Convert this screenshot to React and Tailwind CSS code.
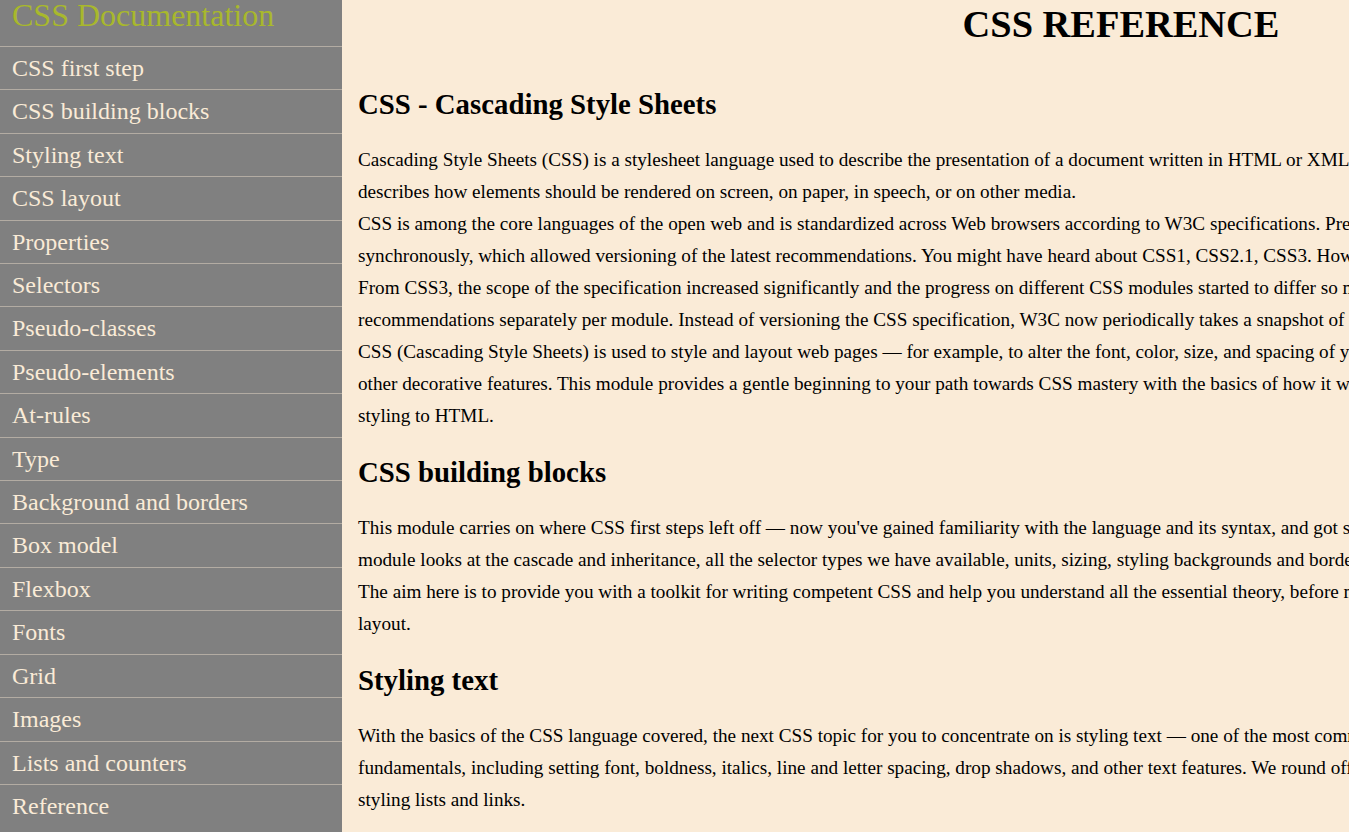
const navItems = [
  'CSS first step',
  'CSS building blocks',
  'Styling text',
  'CSS layout',
  'Properties',
  'Selectors',
  'Pseudo-classes',
  'Pseudo-elements',
  'At-rules',
  'Type',
  'Background and borders',
  'Box model',
  'Flexbox',
  'Fonts',
  'Grid',
  'Images',
  'Lists and counters',
  'Reference',
];

// each entry is one rendered line; the page is wider than the window so lines run off the right edge
const sections = [
  {
    title: 'CSS - Cascading Style Sheets',
    lines: [
      'Cascading Style Sheets (CSS) is a stylesheet language used to describe the presentation of a document written in HTML or XML (including XML dialects such as SVG, MathML or XHTML). CSS',
      'describes how elements should be rendered on screen, on paper, in speech, or on other media.',
      'CSS is among the core languages of the open web and is standardized across Web browsers according to W3C specifications. Previously, development of various parts of CSS specification was done',
      'synchronously, which allowed versioning of the latest recommendations. You might have heard about CSS1, CSS2.1, CSS3. However, CSS4 has never become an official version.',
      'From CSS3, the scope of the specification increased significantly and the progress on different CSS modules started to differ so much, that it became more effective to develop and release',
      'recommendations separately per module. Instead of versioning the CSS specification, W3C now periodically takes a snapshot of the latest stable state of the CSS specification.',
      'CSS (Cascading Style Sheets) is used to style and layout web pages — for example, to alter the font, color, size, and spacing of your content, split it into multiple columns, or add animations and',
      'other decorative features. This module provides a gentle beginning to your path towards CSS mastery with the basics of how it works, what the syntax looks like, and how you can start using it to add',
      'styling to HTML.',
    ],
  },
  {
    title: 'CSS building blocks',
    lines: [
      "This module carries on where CSS first steps left off — now you've gained familiarity with the language and its syntax, and got some basic experience with using it, its time to dive a bit deeper. This",
      'module looks at the cascade and inheritance, all the selector types we have available, units, sizing, styling backgrounds and borders, debugging, and lots more.',
      'The aim here is to provide you with a toolkit for writing competent CSS and help you understand all the essential theory, before moving on to more specific disciplines like text styling and CSS',
      'layout.',
    ],
  },
  {
    title: 'Styling text',
    lines: [
      "With the basics of the CSS language covered, the next CSS topic for you to concentrate on is styling text — one of the most common things you'll do with CSS. Here we look at text styling",
      'fundamentals, including setting font, boldness, italics, line and letter spacing, drop shadows, and other text features. We round off the module by looking at applying custom fonts to your page, and',
      'styling lists and links.',
    ],
  },
];

export default function App() {
  return (
    <div className="flex w-[1349px] h-[832px] overflow-hidden bg-[#faebd7] font-['Liberation_Serif',serif] text-black">
      {/* Side navigation */}
      <nav className="w-[342px] shrink-0 h-full bg-[#808080] overflow-hidden">
        <header className="h-[47px] pl-3 border-b border-[#b3aca3] text-[32px] leading-[30px] text-[#a8b82c]">
          CSS Documentation
        </header>
        <ul>
          {navItems.map((item) => (
            <li
              key={item}
              className="pl-3 py-2 border-b border-[#b3aca3] last:border-b-0 text-[24px] leading-[26.4px] text-[#faebd7]"
            >
              {item}
            </li>
          ))}
        </ul>
      </nav>

      {/* Main content */}
      <main className="w-[1558px] shrink-0 px-4">
        <div className="h-[64px] pt-[3px]">
          <h1 className="text-center text-[38.4px] font-bold leading-[42px]">CSS REFERENCE</h1>
        </div>
        {sections.map((section) => (
          <section key={section.title} className="pt-6">
            <h2 className="text-[28.8px] font-bold leading-[32px]">{section.title}</h2>
            <div className="pt-6 text-[19.2px] leading-[32px]">
              {section.lines.map((line, i) => (
                <p key={i} className="whitespace-nowrap">
                  {line}
                </p>
              ))}
            </div>
          </section>
        ))}
      </main>
    </div>
  );
}
